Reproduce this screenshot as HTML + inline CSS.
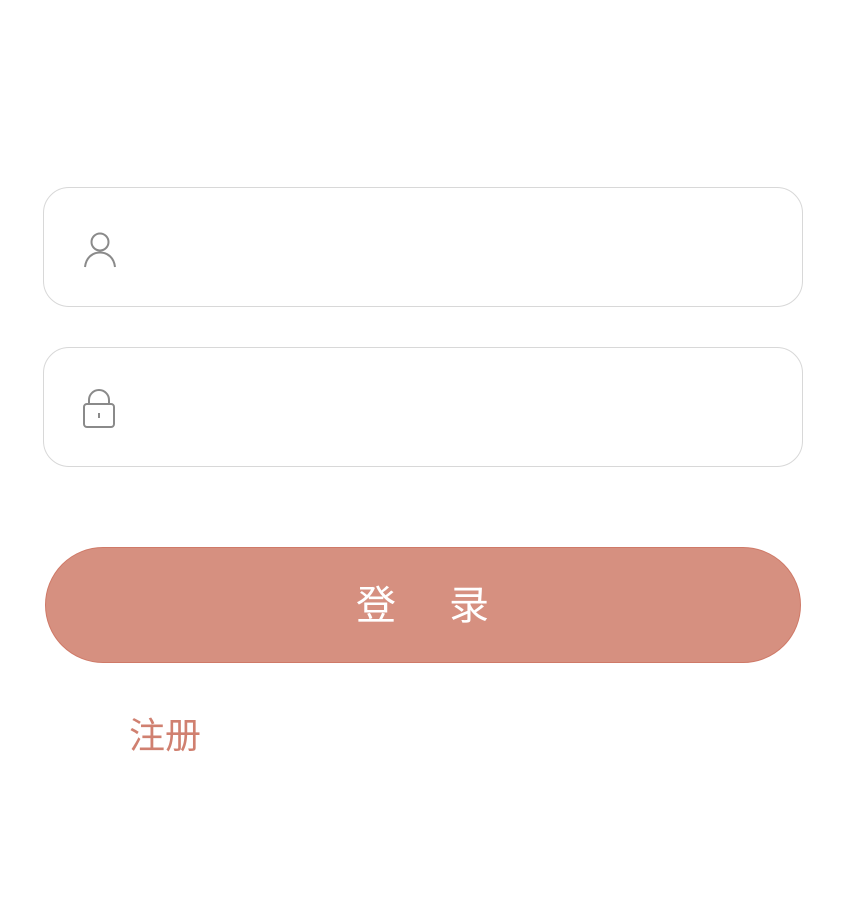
<!DOCTYPE html>
<html><head><meta charset="utf-8"><style>
body{margin:0;width:850px;height:900px;background:#fff;position:relative;font-family:"Liberation Sans","Noto Sans CJK SC",sans-serif}
.box{position:absolute;left:43px;width:760px;height:120px;border:1.5px solid #d8d8d8;border-radius:26px;box-sizing:border-box}
.btn{position:absolute;left:45px;top:547px;width:756px;height:116px;background:#d69080;border:1.5px solid #cf7a68;box-sizing:border-box;border-radius:58px}
.t{position:absolute;top:582px;font-size:40px;color:#fff;line-height:48px}
.reg{position:absolute;left:129px;top:714px;font-size:36px;color:#d08070;line-height:44px}
svg{position:absolute}
</style></head><body>
<div class="box" style="top:187px"></div>
<div class="box" style="top:347px"></div>
<svg style="left:80px;top:228px" width="40" height="42" viewBox="0 0 40 42" fill="none" stroke="#8a8a8a" stroke-width="2">
<circle cx="20" cy="14" r="8.5"/><path d="M5 39 C6 30 12 24.5 20 24.5 C28 24.5 34 30 35 39"/></svg>
<svg style="left:80px;top:388px" width="38" height="42" viewBox="0 0 38 42" fill="none" stroke="#8a8a8a" stroke-width="2">
<path d="M9 16 V12 A10 10 0 0 1 29 12 V16"/><rect x="4" y="16" width="30" height="23" rx="3"/><line x1="19" y1="25" x2="19" y2="30"/></svg>
<div class="btn"></div>
<div class="t" style="left:356px">登</div>
<div class="t" style="left:449px">录</div>
<div class="reg">注册</div>
</body></html>
